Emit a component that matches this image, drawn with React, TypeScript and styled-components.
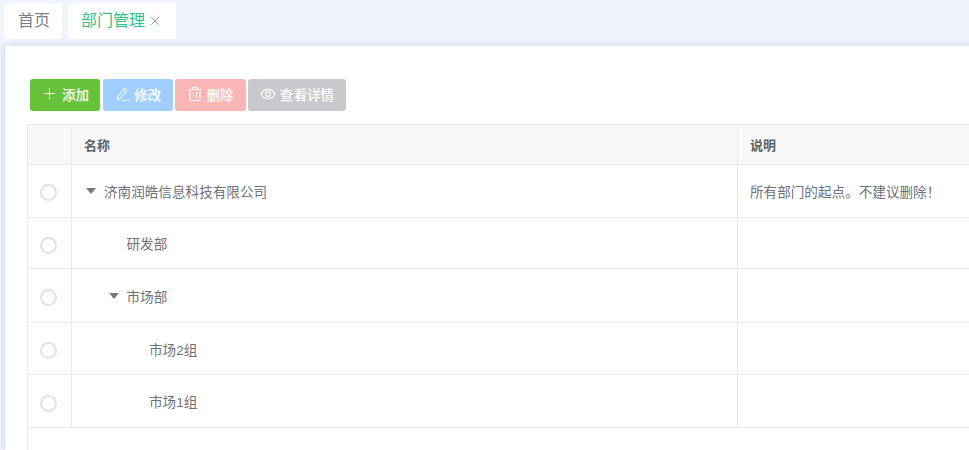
import React from "react";
import styled, { createGlobalStyle } from "styled-components";
import { Plus, X } from "lucide-react";

const Global = createGlobalStyle`
  html, body { margin: 0; padding: 0; height: 100%; overflow: hidden; background: #f0f4fd; }
  body { font-family: "Liberation Sans", "Noto Sans CJK SC", sans-serif; }
  #root { width: 969px; height: 450px; overflow: hidden; }
`;

const Page = styled.div`
  width: 969px;
  height: 450px;
  overflow: hidden;
  display: flex;
  flex-direction: column;
  background: #f0f4fd;
`;

const TabBar = styled.div`
  display: flex;
  gap: 6px;
  height: 39px;
  padding: 3px 0 0 4px;
  box-sizing: border-box;
  flex: none;
`;

const Tab = styled.div<{ $active?: boolean }>`
  height: 36px;
  padding: 0 ${(p) => (p.$active ? 14 : 12)}px 4px ${(p) => (p.$active ? 13 : 14)}px;
  display: flex;
  align-items: center;
  gap: 3px;
  background: #fff;
  box-sizing: border-box;
  font-size: 16px;
  color: ${(p) => (p.$active ? "#2fc087" : "#7a7f8c")};
`;

const Close = styled.span`
  display: inline-flex;
  margin-top: 3px;
  color: #6f7a85;
`;

const Main = styled.div`
  flex: 1;
  margin-top: 7px;
  margin-left: 5px;
  width: 1200px;
  background: #fff;
  border-radius: 3px 0 0 0;
  box-shadow: 0 0 8px rgba(185, 193, 222, 0.7);
  padding: 33px 0 0 22px;
  box-sizing: border-box;
  display: flex;
  flex-direction: column;
`;

const Toolbar = styled.div`
  display: flex;
  padding-left: 3px;
  height: 32px;
  margin-bottom: 13px;
  flex: none;
`;

const Button = styled.button<{ $bg: string; $w: number; $gap: number; $iconGap: number }>`
  width: ${(p) => p.$w}px;
  height: 32px;
  border: none;
  border-radius: 3px;
  background: ${(p) => p.$bg};
  color: #fff;
  padding: 0 0 3px;
  font-family: inherit;
  font-size: 13.6px;
  font-weight: 500;
  display: flex;
  align-items: center;
  justify-content: center;
  gap: ${(p) => p.$iconGap}px;
  margin-right: ${(p) => p.$gap}px;
`;

const TableFrame = styled.div`
  flex: 1;
  border-left: 1px solid #e8e9ec;
`;

const Table = styled.table`
  border-collapse: collapse;
  table-layout: fixed;
  width: 1180px;
  margin-left: -1px;
  font-size: 13.6px;
  color: #6e7176;
`;

const HeadCell = styled.th<{ $w: number }>`
  width: ${(p) => p.$w}px;
  height: 40px;
  padding: 0 12px 1px;
  box-sizing: border-box;
  background: #f8f8f8;
  border: 1px solid #e8e9ec;
  text-align: left;
  font-size: 13px;
  font-weight: 700;
  color: #5f6368;
`;

const Row = styled.tr<{ $h: number }>`
  height: ${(p) => p.$h}px;
`;

const Cell = styled.td`
  padding: 0 12px;
  box-sizing: border-box;
  border: 1px solid #e8e9ec;
`;

const RadioCell = styled.td`
  padding: 0 2px 0 0;
  text-align: center;
  border: 1px solid #e8e9ec;
`;

const Radio = styled.span<{ $dy: number }>`
  display: inline-block;
  width: 17px;
  height: 17px;
  margin-top: ${(p) => p.$dy}px;
  box-sizing: border-box;
  border: 2px solid #dfe1e8;
  border-radius: 50%;
  vertical-align: middle;
`;

const Tree = styled.div<{ $level: number }>`
  display: flex;
  align-items: center;
  padding-left: ${(p) => p.$level * 22.5 + 2}px;
`;

const Arrow = styled.span<{ $show: boolean }>`
  width: 0;
  height: 0;
  flex: none;
  margin-right: 8px;
  border-left: 5.5px solid transparent;
  border-right: 5.5px solid transparent;
  border-top: 6px solid ${(p) => (p.$show ? "#76787e" : "transparent")};
`;

const rows = [
  { name: "济南润皓信息科技有限公司", level: 0, open: true, h: 53, dy: 3, desc: "所有部门的起点。不建议删除！" },
  { name: "研发部", level: 1, open: false, h: 51, dy: 5, desc: "" },
  { name: "市场部", level: 1, open: true, h: 54, dy: 3, desc: "" },
  { name: "市场2组", level: 2, open: false, h: 52, dy: 3, desc: "" },
  { name: "市场1组", level: 2, open: false, h: 53, dy: 5, desc: "" },
];

const PenIcon = () => (
  <svg width="16" height="16" viewBox="0 0 16 16" fill="none" stroke="currentColor" strokeWidth="1">
    <path d="M2.5 14 L3 10.5 L9.5 2 L12 4 L5.6 12.4 Z" />
    <path d="M8.2 3.8 L10.8 5.8" />
    <path d="M7.5 14.5 H14" />
  </svg>
);

const TrashIcon = () => (
  <svg width="16" height="16" viewBox="0 0 16 16" fill="none" stroke="currentColor" strokeWidth="1">
    <path d="M1.5 3.5 H14.5" />
    <path d="M5.5 3.5 V1.5 H10.5 V3.5" />
    <path d="M3 3.5 V14.5 H13 V3.5" />
    <path d="M6.5 6 V12 M9.5 6 V12" />
  </svg>
);

const EyeIcon = () => (
  <svg width="16" height="16" viewBox="0 0 16 16" fill="none" stroke="currentColor" strokeWidth="1.1">
    <path d="M1 8 C3 4.6 5.4 3.4 8 3.4 C10.6 3.4 13 4.6 15 8 C13 11.4 10.6 12.6 8 12.6 C5.4 12.6 3 11.4 1 8 Z" />
    <circle cx="8" cy="8" r="2.4" />
  </svg>
);

export default function App() {
  return (
    <Page>
      <Global />
      <TabBar>
        <Tab>首页</Tab>
        <Tab $active>
          部门管理
          <Close>
            <X size={14} strokeWidth={1.3} />
          </Close>
        </Tab>
      </TabBar>
      <Main>
        <Toolbar>
          <Button $bg="#67c23a" $w={70} $gap={3} $iconGap={4}>
            <Plus size={17} strokeWidth={1.4} />
            添加
          </Button>
          <Button $bg="#a0cfff" $w={70} $gap={2} $iconGap={3}>
            <PenIcon />
            修改
          </Button>
          <Button $bg="#fab6b6" $w={71} $gap={2} $iconGap={3}>
            <TrashIcon />
            删除
          </Button>
          <Button $bg="#c8c9cc" $w={98} $gap={0} $iconGap={4}>
            <EyeIcon />
            查看详情
          </Button>
        </Toolbar>
        <TableFrame>
          <Table>
            <thead>
              <tr>
                <HeadCell $w={44} />
                <HeadCell $w={666}>名称</HeadCell>
                <HeadCell $w={470}>说明</HeadCell>
              </tr>
            </thead>
            <tbody>
              {rows.map((r) => (
                <Row key={r.name} $h={r.h}>
                  <RadioCell>
                    <Radio $dy={r.dy} />
                  </RadioCell>
                  <Cell>
                    <Tree $level={r.level}>
                      <Arrow $show={r.open} />
                      {r.name}
                    </Tree>
                  </Cell>
                  <Cell>{r.desc}</Cell>
                </Row>
              ))}
            </tbody>
          </Table>
        </TableFrame>
      </Main>
    </Page>
  );
}
